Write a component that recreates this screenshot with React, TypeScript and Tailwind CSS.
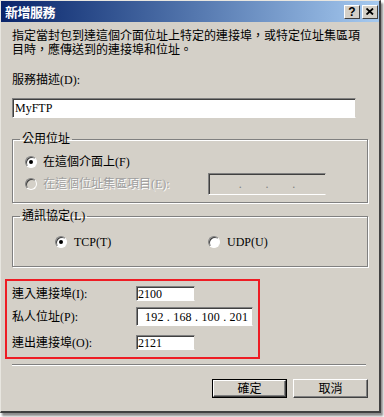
import React from "react";

const FONT = "font-['Liberation_Serif','Noto_Sans_CJK_TC',serif]";

function Radio({ checked, disabled }: { checked?: boolean; disabled?: boolean }) {
  return (
    <span
      className={`relative inline-block w-[12px] h-[12px] rounded-full border border-t-[#808080] border-l-[#808080] border-b-white border-r-white ${
        disabled ? "bg-[#d4d0c8]" : "bg-white"
      } shadow-[inset_1px_1px_0_#404040]`}
    >
      {checked && (
        <span className="absolute left-[3px] top-[3px] w-[4px] h-[4px] rounded-full bg-black" />
      )}
    </span>
  );
}

function Field({ w, h, children, disabled }: { w: string; h: string; children?: React.ReactNode; disabled?: boolean }) {
  return (
    <div
      className={`${w} ${h} flex items-center border border-t-[#808080] border-l-[#808080] border-b-white border-r-[#d4d0c8] shadow-[inset_1px_1px_0_#404040] ${
        disabled ? "bg-[#d4d0c8]" : "bg-white"
      } text-[12px] leading-[14px] text-black`}
    >
      {children}
    </div>
  );
}

function Btn({ children, def }: { children: React.ReactNode; def?: boolean }) {
  return (
    <div className={`w-[75px] h-[19px] ${def ? "border border-black" : ""}`}>
      <div className="w-full h-full flex items-center justify-center bg-[#d4d0c8] border border-t-white border-l-white border-b-[#404040] border-r-[#404040] shadow-[inset_-1px_-1px_0_#808080] text-[12px] leading-[14px] text-black">
        {children}
      </div>
    </div>
  );
}

export default function App() {
  return (
    <div className={`w-[384px] h-[417px] bg-white ${FONT}`}>
      <div className="w-[381px] h-[413px] bg-[#d4d0c8] border-t border-l border-t-[#e8e6e0] border-l-[#e8e6e0] border-r-2 border-b-2 border-r-[#404040] border-b-[#404040] shadow-[2px_3px_2px_rgba(0,0,0,0.45)] flex flex-col">
        {/* title bar */}
        <div className="h-[21px] bg-gradient-to-r from-[#0a246a] to-[#a6caf0] flex items-center pl-[4px] pr-[1px]">
          <span className="text-white font-bold text-[13px] leading-[15px] font-['Noto_Sans_CJK_TC',sans-serif] tracking-[-0.5px]">
            新增服務
          </span>
          <div className="ml-auto flex items-center gap-[2px]">
            <div className="w-[16px] h-[14px] bg-[#d4d0c8] border border-t-white border-l-white border-b-[#404040] border-r-[#404040] flex items-center justify-center text-[12px] leading-[12px] font-bold font-['Liberation_Sans',sans-serif] text-black">
              ?
            </div>
            <div className="w-[16px] h-[14px] bg-[#d4d0c8] border border-t-white border-l-white border-b-[#404040] border-r-[#404040] flex items-center justify-center">
              <svg width="8" height="7" viewBox="0 0 8 7">
                <path d="M0.5 0.5 L7 6.5 M7 0.5 L0.5 6.5" stroke="#000" strokeWidth="1.8" />
              </svg>
            </div>
          </div>
        </div>

        {/* body */}
        <div className="flex flex-col pl-[11px] pr-[11px] text-[12px] leading-[14px] text-black">
          <p className="mt-[7px]">
            指定當封包到達這個介面位址上特定的連接埠，或特定位址集區項
            <br />
            目時，應傳送到的連接埠和位址。
          </p>

          <p className="mt-[16px]">服務描述(D):</p>
          <div className="mt-[11px]">
            <Field w="w-[344px]" h="h-[20px]">
              <span className="pl-[2px]">MyFTP</span>
            </Field>
          </div>

          <fieldset className="mt-[14px] w-[356px] border border-[#808080] shadow-[inset_1px_1px_0_white,1px_1px_0_white] pb-[7px]">
            <legend className="ml-[7px] px-[2px]">公用位址</legend>
            <div className="mt-[8px] flex items-center pl-[12px] h-[16px]">
              <Radio checked />
              <span className="ml-[6px]">在這個介面上(F)</span>
            </div>
            <div className="mt-[3px] flex items-center pl-[12px] h-[22px]">
              <Radio disabled />
              <span className="ml-[6px] text-[#a0a0a0] [text-shadow:1px_1px_0_white]">在這個位址集區項目(E):</span>
              <div className="ml-auto mr-[41px]">
                <Field w="w-[118px]" h="h-[22px]" disabled>
                  <div className="w-full flex justify-around px-[18px] text-[#808080]">
                    <span>.</span>
                    <span>.</span>
                    <span>.</span>
                  </div>
                </Field>
              </div>
            </div>
          </fieldset>

          <fieldset className="mt-[6px] w-[356px] border border-[#808080] shadow-[inset_1px_1px_0_white,1px_1px_0_white] pb-[16px]">
            <legend className="ml-[7px] px-[2px]">通訊協定(L)</legend>
            <div className="mt-[11px] flex items-center h-[16px]">
              <div className="flex items-center pl-[42px] w-[195px]">
                <Radio checked />
                <span className="ml-[7px]">TCP(T)</span>
              </div>
              <div className="flex items-center">
                <Radio />
                <span className="ml-[7px]">UDP(U)</span>
              </div>
            </div>
          </fieldset>

          <div className="mt-[12px] -ml-[7px] w-[255px] border-2 border-[#ee1c24] pl-[5px] pt-[5px] pb-[7px] flex flex-col">
            <div className="flex items-center h-[15px]">
              <span className="w-[124px]">連入連接埠(I):</span>
              <Field w="w-[59px]" h="h-[15px]">
                <span className="pl-[1px]">2100</span>
              </Field>
            </div>
            <div className="mt-[6px] flex items-center h-[19px]">
              <span className="w-[124px]">私人位址(P):</span>
              <Field w="w-[117px]" h="h-[19px]">
                <span className="pl-[8px] tracking-[0.2px]">192 . 168 . 100 . 201</span>
              </Field>
            </div>
            <div className="mt-[9px] flex items-center h-[15px]">
              <span className="w-[124px]">連出連接埠(O):</span>
              <Field w="w-[59px]" h="h-[15px]">
                <span className="pl-[1px]">2121</span>
              </Field>
            </div>
          </div>

          <div className="mt-[5px] w-[354px] h-[2px] border-t border-t-[#808080] border-b border-b-white" />

          <div className="mt-[13px] flex justify-end gap-[6px]">
            <Btn def>確定</Btn>
            <Btn>取消</Btn>
          </div>
        </div>
      </div>
    </div>
  );
}
